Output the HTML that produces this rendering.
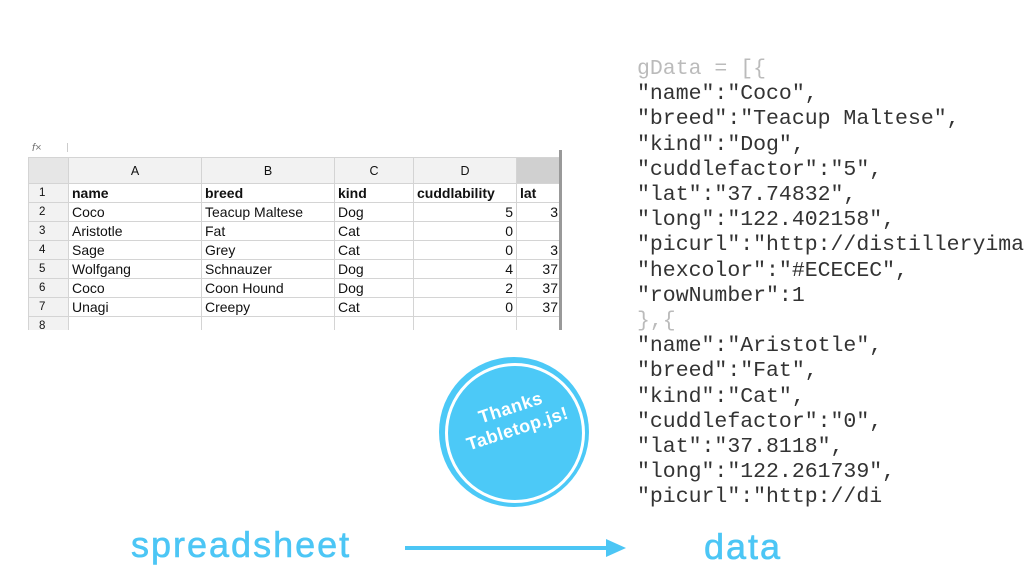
<!DOCTYPE html>
<html><head><style>
body{margin:0;width:1024px;height:584px;background:#fff;position:relative;overflow:hidden;font-family:"Liberation Sans",sans-serif}
.code{position:absolute;left:637px;top:57px;font-family:"Liberation Mono",monospace;font-size:21.5px;line-height:25.2px;color:#333;white-space:pre}
.g{color:#bbb}
table{position:absolute;left:28px;top:157px;border-collapse:collapse;font-size:14px;color:#111}
td{border:1px solid #d4d4d4;height:18px;padding:0 3px;white-space:nowrap;overflow:hidden}
tr.h td{background:#f2f2f2;text-align:center;height:25px;font-size:12.5px}
td.n{background:#f2f2f2;text-align:left;font-size:11.5px;padding-left:10px}
.r{text-align:right}
.b td{font-weight:bold}
.blue{color:#4cc6f5;position:absolute;font-size:36px;letter-spacing:2px;-webkit-text-stroke:0.6px #4cc6f5}
</style></head><body>
<div style="position:absolute;left:32px;top:142px;font-size:11px;color:#777;font-style:italic">f×</div>
<div style="position:absolute;left:67px;top:143px;width:1px;height:9px;background:#ccc"></div>
<table>
<colgroup><col style="width:40px"><col style="width:133px"><col style="width:133px"><col style="width:79px"><col style="width:103px"><col style="width:45px"></colgroup>
<tr class="h"><td style="background:#e6e6e6"></td><td>A</td><td>B</td><td>C</td><td>D</td><td style="background:#d0d0d0"></td></tr>
<tr class="b"><td class="n" style="font-weight:normal">1</td><td>name</td><td>breed</td><td>kind</td><td>cuddlability</td><td>lat</td></tr>
<tr><td class="n">2</td><td>Coco</td><td>Teacup Maltese</td><td>Dog</td><td class="r">5</td><td class="r">3</td></tr>
<tr><td class="n">3</td><td>Aristotle</td><td>Fat</td><td>Cat</td><td class="r">0</td><td></td></tr>
<tr><td class="n">4</td><td>Sage</td><td>Grey</td><td>Cat</td><td class="r">0</td><td class="r">3</td></tr>
<tr><td class="n">5</td><td>Wolfgang</td><td>Schnauzer</td><td>Dog</td><td class="r">4</td><td class="r">37</td></tr>
<tr><td class="n">6</td><td>Coco</td><td>Coon Hound</td><td>Dog</td><td class="r">2</td><td class="r">37</td></tr>
<tr><td class="n">7</td><td>Unagi</td><td>Creepy</td><td>Cat</td><td class="r">0</td><td class="r">37</td></tr>
<tr><td class="n" style="height:12px">8</td><td></td><td></td><td></td><td></td><td></td></tr>
</table>
<div style="position:absolute;left:559px;top:150px;width:3px;height:180px;background:#999"></div>
<div style="position:absolute;left:0;top:330px;width:580px;height:20px;background:#fff"></div>
<div class="code"><span class="g">gData = [{</span>
"name":"Coco",
"breed":"Teacup Maltese",
"kind":"Dog",
"cuddlefactor":"5",
"lat":"37.74832",
"long":"122.402158",
"picurl":"http://distilleryimag
"hexcolor":"#ECECEC",
"rowNumber":1
<span class="g">},{</span>
"name":"Aristotle",
"breed":"Fat",
"kind":"Cat",
"cuddlefactor":"0",
"lat":"37.8118",
"long":"122.261739",
"picurl":"http://di</div>
<div style="position:absolute;left:439px;top:357px;width:150px;height:150px;border-radius:50%;background:#4cc9f7"></div>
<div style="position:absolute;left:445px;top:363px;width:134px;height:134px;border-radius:50%;border:3px solid #fff;background:#4cc9f7"></div>
<div style="position:absolute;left:434px;top:396px;width:160px;text-align:center;color:#fff;font-size:18px;font-weight:bold;line-height:22px;transform:rotate(-18deg);letter-spacing:0.5px">Thanks<br>Tabletop.js!</div>
<div class="blue" style="left:131px;top:524px">spreadsheet</div>
<div class="blue" style="left:704px;top:526px">data</div>
<div style="position:absolute;left:405px;top:546px;width:205px;height:4px;background:#4cc6f5"></div>
<div style="position:absolute;left:606px;top:539px;width:0;height:0;border-left:20px solid #4cc6f5;border-top:9px solid transparent;border-bottom:9px solid transparent"></div>
</body></html>
